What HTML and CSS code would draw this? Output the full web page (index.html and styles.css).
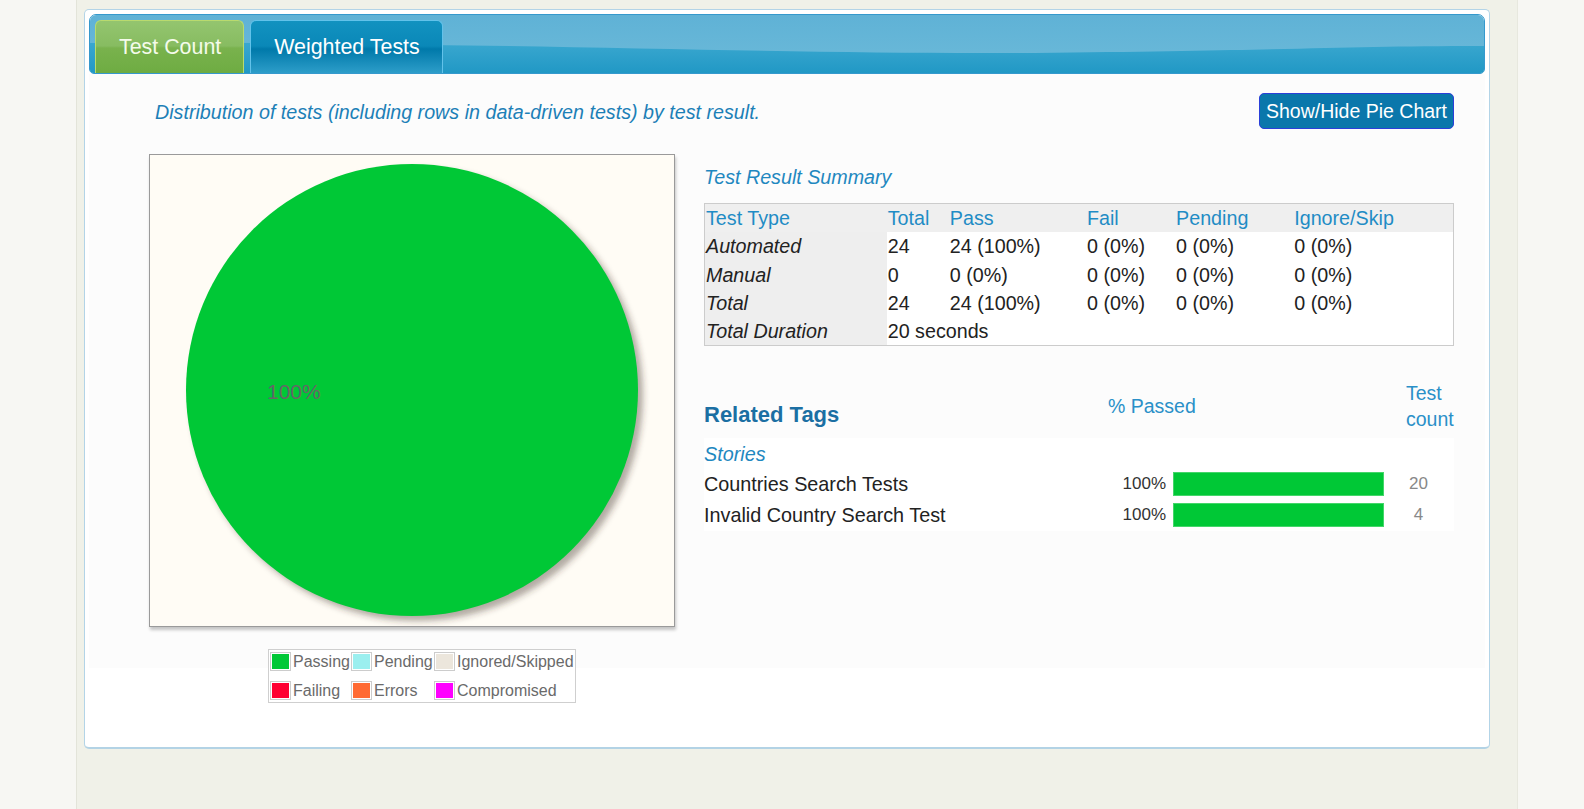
FILE: index.html
```html
<!DOCTYPE html>
<html lang="en">
<head>
<meta charset="utf-8">
<title>Test Count</title>
<link rel="stylesheet" href="styles.css">
</head>
<body>
<div class="page-col">
  <div class="panel">
    <div class="tabbar">
      <svg class="wave" viewBox="0 0 1395 60" preserveAspectRatio="none" aria-hidden="true">
        <defs>
          <linearGradient id="lowGrad" x1="0" y1="0" x2="0" y2="1">
            <stop offset="0" stop-color="#3aa7cf"/>
            <stop offset="1" stop-color="#2198c5"/>
          </linearGradient>
          <linearGradient id="topGrad" x1="0" y1="0" x2="0" y2="1">
            <stop offset="0" stop-color="#5fb2d6"/>
            <stop offset="1" stop-color="#6cbad9"/>
          </linearGradient>
        </defs>
        <rect x="0" y="0" width="1395" height="60" fill="url(#topGrad)"/>
        <path d="M0 29 C 350 26, 700 42, 964 39 S 1250 32, 1395 32 L1395 60 L0 60 Z" fill="url(#lowGrad)"/>
      </svg>
      <div class="tab tab-active">Test Count</div>
      <div class="tab tab-blue">Weighted Tests</div>
    </div>
    <div class="content">
      <div class="desc-row">
        <p class="desc">Distribution of tests (including rows in data-driven tests) by test result.</p>
        <button class="toggle-btn">Show/Hide Pie Chart</button>
      </div>
      <div class="charts">
        <div class="pie-col">
          <div class="pie-box">
            <svg width="524" height="471" viewBox="0 0 524 471">
              <defs>
                <filter id="shadowBlur" x="-10%" y="-10%" width="120%" height="120%">
                  <feGaussianBlur stdDeviation="3"/>
                </filter>
              </defs>
              <circle cx="267" cy="240" r="226" fill="rgba(60,50,40,0.4)" filter="url(#shadowBlur)"/>
              <circle cx="262" cy="235" r="226" fill="#00c836"/>
              <text x="117" y="244" class="pie-label">100%</text>
            </svg>
          </div>
          <div class="legend">
            <span class="sw"><i class="c-pass"></i></span><span class="lg">Passing</span>
            <span class="sw"><i class="c-pend"></i></span><span class="lg">Pending</span>
            <span class="sw"><i class="c-ign"></i></span><span class="lg">Ignored/Skipped</span>
            <span class="sw"><i class="c-fail"></i></span><span class="lg">Failing</span>
            <span class="sw"><i class="c-err"></i></span><span class="lg">Errors</span>
            <span class="sw"><i class="c-comp"></i></span><span class="lg">Compromised</span>
          </div>
        </div>
        <div class="summary-col">
          <h4 class="sum-title">Test Result Summary</h4>
          <table class="summary">
            <colgroup>
              <col class="w1"><col class="w2"><col class="w3"><col class="w4"><col class="w5"><col class="w6">
            </colgroup>
            <thead>
              <tr><th>Test Type</th><th>Total</th><th>Pass</th><th>Fail</th><th>Pending</th><th>Ignore/Skip</th></tr>
            </thead>
            <tbody>
              <tr><td class="rh">Automated</td><td>24</td><td>24 (100%)</td><td>0 (0%)</td><td>0 (0%)</td><td>0 (0%)</td></tr>
              <tr><td class="rh">Manual</td><td>0</td><td>0 (0%)</td><td>0 (0%)</td><td>0 (0%)</td><td>0 (0%)</td></tr>
              <tr><td class="rh">Total</td><td>24</td><td>24 (100%)</td><td>0 (0%)</td><td>0 (0%)</td><td>0 (0%)</td></tr>
              <tr><td class="rh">Total Duration</td><td colspan="5">20 seconds</td></tr>
            </tbody>
          </table>
          <table class="tags">
            <colgroup><col class="t1"><col class="t2"><col class="t3"></colgroup>
            <thead>
              <tr>
                <th class="tags-title">Related Tags</th>
                <th class="pct-head">% Passed</th>
                <th class="cnt-head">Test count</th>
              </tr>
            </thead>
            <tbody>
              <tr class="group"><td colspan="3">Stories</td></tr>
              <tr class="tag-row">
                <td>Countries Search Tests</td>
                <td><div class="pct"><span class="pct-num">100%</span><span class="bar" style="width:211px"></span></div></td>
                <td class="cnt">20</td>
              </tr>
              <tr class="tag-row">
                <td>Invalid Country Search Test</td>
                <td><div class="pct"><span class="pct-num">100%</span><span class="bar" style="width:211px"></span></div></td>
                <td class="cnt">4</td>
              </tr>
            </tbody>
          </table>
        </div>
      </div>
    </div>
  </div>
</div>
</body>
</html>
```

FILE: styles.css
```css
* { box-sizing: border-box; }

html, body {
  margin: 0;
  padding: 0;
}

body {
  background: #f7f7f3;
  font-family: "Liberation Sans", Arial, sans-serif;
  color: #222;
  overflow: hidden;
}

.page-col {
  margin-left: 76px;
  width: 1442px;
  min-height: 809px;
  background: #f0f1e8;
  border-left: 1px solid #e3e4d9;
  border-right: 1px solid #e7e8de;
  padding-top: 9px;
  padding-left: 7px;
}

.panel {
  width: 1406px;
  background: #fff;
  border: 1px solid #b3d4e7;
  border-bottom: 2px solid #b3d3e5;
  border-radius: 5px;
  padding: 4px 4px 0 4px;
}

/* ---------- tab bar ---------- */
.tabbar {
  position: relative;
  height: 60px;
  border: 1px solid #3599cd;
  border-radius: 7px 7px 5px 5px;
  overflow: hidden;
  display: flex;
  align-items: flex-end;
  gap: 6px;
  padding-left: 5px;
}

.wave {
  position: absolute;
  left: 0;
  top: 0;
  width: 100%;
  height: 100%;
  z-index: 0;
}

.tab {
  position: relative;
  z-index: 1;
  height: 53px;
  display: flex;
  align-items: center;
  padding: 1px 22px 0 23px;
  font-size: 21.4px;
  border-radius: 6px 6px 0 0;
  border: 1px solid transparent;
  border-bottom: none;
  white-space: nowrap;
}

.tab-active {
  color: #f4fbea;
  border-color: #b9da6e;
  background: linear-gradient(#94c56f 0%, #87bc61 48%, #79b24d 52%, #6eac42 100%);
}

.tab-blue {
  color: #ffffff;
  border-color: #62c2ea;
  background: linear-gradient(#1292c0 0%, #0a88b8 48%, #0079aa 54%, #2d9dc9 100%);
}

/* ---------- content ---------- */
.content {
  padding: 19px 31px 44px 60px;
  background: linear-gradient(#fcfcfc 0, #fcfcfc 594px, #ffffff 594px);
}

.desc-row {
  display: flex;
  align-items: center;
  justify-content: space-between;
  height: 36px;
}

.desc {
  margin: 1px 0 0 6px;
  font-size: 19.7px;
  font-style: italic;
  color: #1c80b7;
  line-height: 22px;
}

.toggle-btn {
  height: 36px;
  padding: 0 6px;
  border: 1px solid #2b3fd9;
  border-radius: 5px;
  background: #0a77ab;
  color: #fff;
  font-family: "Liberation Sans", Arial, sans-serif;
  font-size: 19.5px;
  line-height: 22px;
}

.charts {
  display: flex;
  gap: 29px;
  margin-top: 25px;
}

/* ---------- pie ---------- */
.pie-col {
  width: 526px;
  flex: none;
}

.pie-box {
  width: 526px;
  height: 473px;
  border: 1px solid #9a9a9a;
  background: #fffcf5;
  box-shadow: 1px 3px 3px rgba(0, 0, 0, 0.22);
}

.pie-box svg { display: block; }

.pie-label {
  font-family: "Liberation Sans", Arial, sans-serif;
  font-size: 21px;
  fill: #666;
}

.legend {
  margin: 22px 0 0 119px;
  width: 308px;
  border: 1px solid #cfcfcf;
  padding: 2px 1px;
  display: grid;
  grid-template-columns: 21px 56px 21px 58px 21px 117px;
  grid-auto-rows: 19px;
  column-gap: 2px;
  row-gap: 10px;
  font-size: 16px;
  color: #6a6a6a;
  background: #fff;
}

.sw {
  border: 1px solid #cccccc;
  padding: 1px;
  display: flex;
}

.sw i {
  display: block;
  flex: 1;
}

.lg {
  line-height: 19px;
  white-space: nowrap;
}

.c-pass { background: #00c836; }
.c-pend { background: #9befef; }
.c-ign  { background: #ece6dc; }
.c-fail { background: #ff0032; }
.c-err  { background: #ff6a33; }
.c-comp { background: #ff00ff; }

/* ---------- summary ---------- */
.summary-col {
  width: 750px;
  flex: none;
}

.sum-title {
  margin: 12px 0 0 0;
  font-size: 19.7px;
  font-weight: normal;
  font-style: italic;
  line-height: 22px;
  color: #1f88c0;
}

.summary {
  margin-top: 15px;
  width: 750px;
  border-collapse: collapse;
  table-layout: fixed;
  border: 1px solid #cccccc;
  font-size: 19.7px;
}

.w1 { width: 182px; }
.w2 { width: 62px; }
.w3 { width: 137px; }
.w4 { width: 89px; }
.w5 { width: 118px; }
.w6 { width: 160px; }

.summary th,
.summary td {
  padding: 3px 1px;
  line-height: 22.3px;
  text-align: left;
  white-space: nowrap;
}

.summary thead tr {
  background: #efefef;
}

.summary th {
  font-weight: normal;
  color: #1f8cc5;
}

.summary tbody td {
  background: #ffffff;
  color: #222;
}

.summary tbody td.rh {
  background: #eeeeee;
  font-style: italic;
}

/* ---------- related tags ---------- */
.tags {
  margin-top: 28px;
  width: 750px;
  border-collapse: collapse;
  table-layout: fixed;
  font-size: 19.5px;
}

.t1 { width: 404px; }
.t2 { width: 298px; }
.t3 { width: 48px; }

.tags th {
  font-weight: normal;
  text-align: left;
  vertical-align: middle;
  height: 64px;
  padding: 0;
  line-height: 26px;
}

.tags th.tags-title {
  font-size: 22px;
  font-weight: bold;
  color: #1b6fa3;
  padding-top: 18px;
}

.pct-head,
.cnt-head {
  color: #2a90c8;
}

.tags tbody tr {
  background: #ffffff;
}

.group td {
  font-style: italic;
  color: #1f88c0;
  padding: 5px 0 4px 0;
  line-height: 22px;
  font-size: 19.8px;
}

.tag-row td {
  padding: 3px 0 4px 0;
  line-height: 24px;
  color: #222;
  vertical-align: middle;
  font-size: 19.8px;
}

.pct {
  display: flex;
  align-items: center;
  gap: 7px;
}

.pct-num {
  width: 58px;
  text-align: right;
  font-size: 17px;
  color: #333;
}

.bar {
  display: block;
  height: 24px;
  background: #00c836;
  box-shadow: inset 0 0 0 1px #44d66a;
}

.tag-row td.cnt {
  font-size: 17px;
  color: #888;
  text-align: center;
  padding-right: 23px;
}
```
